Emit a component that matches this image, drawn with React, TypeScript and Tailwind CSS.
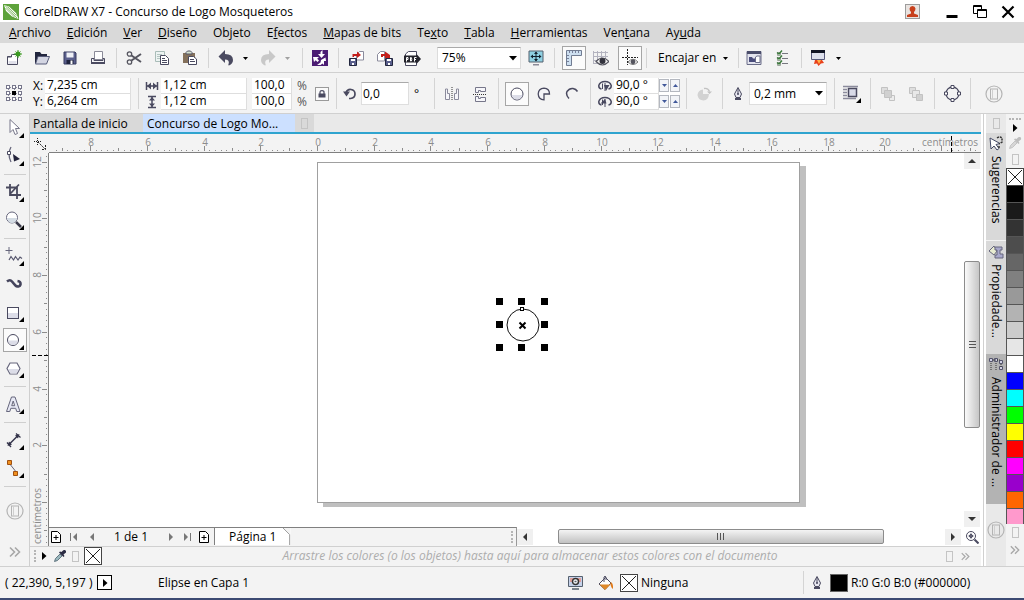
import React from 'react';
import clsx from 'clsx';

const INK = '#4a4a60';
const DIM = '#c2c2c2';
const CM = 28.37;

interface IconProps {
    size?: number;
    children: React.ReactNode;
}

const Icon: React.FC<IconProps> = ({ size = 16, children }) => (
    <svg width={size} height={size} viewBox={`0 0 ${size} ${size}`} fill="none" className="block shrink-0" aria-hidden="true">
        {children}
    </svg>
);

const Caret: React.FC<{ dim?: boolean }> = ({ dim }) => (
    <svg width="5" height="3" viewBox="0 0 5 3" className="block shrink-0" aria-hidden="true">
        <path d="M0 0h5L2.500 3z" fill={dim ? '#a0a0a0' : '#000'} />
    </svg>
);

const Sep = () => <div className="flex w-2 shrink-0 justify-center self-stretch py-1"><span className="w-px bg-[#d4d4d4]" /></div>;

interface ToolProps {
    label: string;
    className?: string;
    active?: boolean;
    children: React.ReactNode;
}

const Tool: React.FC<ToolProps> = ({ label, className = 'w-7', active, children }) => (
    <button
        type="button"
        aria-label={label}
        title={label}
        className={clsx('flex h-6 shrink-0 items-center justify-center', active && 'border border-[#a6a6a6] bg-[#fbfbfb]', className)}
    >
        {children}
    </button>
);

/* ---------- shared glyphs ---------- */

const EmptyBox = () => (
    <svg width="7" height="11" viewBox="0 0 7 11" className="block shrink-0" aria-hidden="true">
        <rect x="0.500" y="0.500" width="6" height="10" fill="none" stroke="#c4c4c4" />
    </svg>
);

const RoundDoc = () => (
    <Icon size={18}>
        <circle cx="9" cy="9" r="8" stroke="#b4b4b4" strokeWidth="1.200" />
        <rect x="5.500" y="4" width="7" height="10" stroke="#b4b4b4" />
        <path d="M7.500 4v10" stroke="#cfcfcf" />
    </Icon>
);

const Chevrons: React.FC<{ size?: number }> = ({ size = 12 }) => (
    <svg width={size} height={size} viewBox="0 0 12 12" fill="none" className="block shrink-0" aria-hidden="true">
        <path d="M1 1.500l4.500 4.500L1 10.500M6 1.500l4.500 4.500L6 10.500" stroke="#a8a8a8" strokeWidth="1.600" />
    </svg>
);

const NoColor = () => (
    <svg width="18" height="18" viewBox="0 0 18 18" className="block shrink-0" aria-hidden="true">
        <rect x="0.500" y="0.500" width="17" height="17" fill="#fff" stroke="#444" />
        <path d="M2 2l14 14M16 2L2 16" stroke="#222" />
    </svg>
);

const Dropper: React.FC<{ dim?: boolean }> = ({ dim }) => (
    <Icon size={14}>
        <path d="M1.500 12.500l1-3 4.500-4.500 2 2L4.500 11.500z" fill={dim ? '#d6d6d6' : '#9ab7bd'} stroke={dim ? '#bbb' : '#49606c'} strokeWidth="0.800" />
        <path d="M6 3.500l4.500 4.500 1-1-1-1.500L13 3.500Q13.500 1.500 12 1 10.500.5 9.500 2L8.500 3 7 2.500z" fill={dim ? '#bdbdbd' : '#2c2c44'} />
    </Icon>
);

const PenNib = () => (
    <Icon size={14}>
        <path d="M7 .5L3.500 7 5 10.500h4L10.500 7z" fill="#e8e8f0" stroke={INK} />
        <path d="M7 2v5" stroke={INK} />
        <circle cx="7" cy="7" r="1" fill={INK} />
        <path d="M4 11h6v2H4z" fill={INK} />
    </Icon>
);

const Flyout = () => <path d="M20 15v5h-5z" fill="#000" />;

/* ---------- title bar and menu ---------- */

const TitleBar = () => (
    <header className="flex h-[22px] items-center bg-white pt-px pl-[3px]">
        <Icon size={16}>
            <rect width="16" height="16" fill="#5da23a" />
            <path d="M1 1L6 2.500 13 9 15.500 15 9 12.500 3 7z" fill="#fff" />
            <path d="M2 1.500L14 14M4.500 2.500l9 9M2.500 4l9 9" stroke="#5da23a" strokeWidth="0.700" />
        </Icon>
        <h1 className="ml-[5px] flex-1 whitespace-nowrap">CorelDRAW X7 - Concurso de Logo Mosqueteros</h1>
        <button type="button" aria-label="Cuenta" className="mr-[26px]">
            <Icon size={15}>
                <rect x="0.500" y="0.500" width="14" height="14" fill="#e9e3e0" stroke="#9c9c9c" />
                <path d="M2 13v-2l4-1.500V8Q4.500 6.500 4.500 4.500 5 2 7.500 2t3 2.500Q10.500 6.500 9 8v1.500l4 1.500v2z" fill="#c8401c" />
            </Icon>
        </button>
        <button type="button" aria-label="Minimizar" className="mr-[15px]">
            <Icon size={12}><path d="M.5 9h11v3H.5z" fill="#000" /></Icon>
        </button>
        <button type="button" aria-label="Restaurar" className="mr-[14px]">
            <Icon size={14}>
                <path d="M4.500 8.500h-4v-8h8v4M.5 1.500h8M4.500 4.500h9v8h-9zM4.500 5.500h9" stroke="#000" />
            </Icon>
        </button>
        <button type="button" aria-label="Cerrar" className="mr-[9px]">
            <Icon size={14}><path d="M1.500 1.500l11 11M12.500 1.500l-11 11" stroke="#000" strokeWidth="2.200" /></Icon>
        </button>
    </header>
);

// [before, accelerator, after]
const MENUS = [
    ['', 'A', 'rchivo'],
    ['', 'E', 'dición'],
    ['', 'V', 'er'],
    ['', 'D', 'iseño'],
    ['Ob', 'j', 'eto'],
    ['E', 'f', 'ectos'],
    ['', 'M', 'apas de bits'],
    ['Te', 'x', 'to'],
    ['', 'T', 'abla'],
    ['', 'H', 'erramientas'],
    ['Ven', 't', 'ana'],
    ['Ay', 'u', 'da'],
];

const MenuBar = () => (
    <nav className="flex h-[21px] items-center gap-4 bg-[#d9d9d9] pl-[9px]">
        {MENUS.map(([pre, key, post]) => (
            <button type="button" key={pre + key + post} className="whitespace-nowrap">
                {pre}<u>{key}</u>{post}
            </button>
        ))}
    </nav>
);

/* ---------- standard toolbar ---------- */

const StandardBar = () => (
    <div className="flex h-[30px] items-center border-b border-[#d0d0d0] pt-px">
        <Tool label="Nuevo">
            <Icon size={16}>
                <path d="M1.500 14.500v-8h3l2-2h5v10z" fill="#fff" stroke={INK} />
                <path d="M1.500 7h4V4.500" stroke={INK} />
                <path d="M2.500 11h8v3h-8z" fill="#e0e0ea" />
                <circle cx="12" cy="4" r="2.500" fill="#3a9a20" />
                <path d="M12 0v8M8 4h8M9.500 1.500l5 5M14.500 1.500l-5 5" stroke="#3a9a20" />
            </Icon>
        </Tool>
        <Tool label="Abrir">
            <Icon size={16}>
                <path d="M1 2h5l1.500 2H13v3H4l-2 6H1z" fill="#22263e" />
                <path d="M4 6.500h11.500l-3 7.500H1.500z" fill="#d3d5e2" stroke="#565a78" />
            </Icon>
        </Tool>
        <Tool label="Guardar">
            <Icon size={14}>
                <path d="M1 1h11l1 1v11H1z" fill="#5a5f8c" stroke="#363a5e" />
                <path d="M3.500 1.500h7v5h-7z" fill="#eef0f6" />
                <path d="M3.500 9h7v4h-7z" fill="#20243e" />
                <path d="M7.500 9.500h2V13h-2z" fill="#fff" />
            </Icon>
        </Tool>
        <Tool label="Imprimir">
            <Icon size={16}>
                <path d="M4.500 1.500h8v8h-8z" fill="#fff" stroke="#8b8b98" />
                <path d="M1.500 8.500H4v2h9v-2h1.500v5h-13z" fill="#f5f5f7" stroke={INK} />
                <path d="M1 12h14v2H1z" fill={INK} />
            </Icon>
        </Tool>
        <Sep />
        <Tool label="Cortar">
            <Icon size={16}>
                <path d="M5.500 5.500L15 12M5.500 10.500L15 4" stroke="#55555f" strokeWidth="2" />
                <circle cx="3.500" cy="4" r="2.200" stroke="#55555f" strokeWidth="1.300" />
                <circle cx="3.500" cy="12" r="2.200" stroke="#55555f" strokeWidth="1.300" />
            </Icon>
        </Tool>
        <Tool label="Copiar">
            <Icon size={16}>
                <path d="M1.500 1.500h9v10h-9z" fill="#edf3f2" stroke="#a9bcb8" />
                <path d="M3 4.500h5M3 6.500h3M3 8.500h3" stroke="#b5c6c2" />
                <path d="M6.500 5.500h5l3 3v6h-8z" fill="#fff" stroke={INK} />
                <path d="M8 8.500h3M8 10.500h5M8 12.500h5" stroke={INK} />
            </Icon>
        </Tool>
        <Tool label="Pegar">
            <Icon size={16}>
                <path d="M1 3h12v10H1z" fill="#84705a" />
                <path d="M4 4V2.500L5.500 1h3L10 2.500V4z" fill="#d5e2cf" stroke="#556" />
                <path d="M6.500 6.500h5l3 2.500v5.500h-8z" fill="#fff" stroke={INK} />
                <path d="M8 9.500h4M8 11.500h5" stroke={INK} />
            </Icon>
        </Tool>
        <Sep />
        <Tool label="Deshacer">
            <Icon size={16}>
                <path d="M7 0v4q8 0 8 6 0 3.500-4 5.500-1.500-.5-.5-1Q12 9.500 7 9.500V13L.5 6.500z" fill={INK} />
            </Icon>
        </Tool>
        <Tool label="Lista deshacer" className="w-[10px]"><Caret /></Tool>
        <Tool label="Rehacer" className="ml-1 w-7">
            <Icon size={16}>
                <path d="M9 0v4q-8 0-8 6 0 3.500 4 5.500 1.500-.5.5-1Q4 9.500 9 9.500V13l6.500-6.500z" fill="#c8c8c8" />
            </Icon>
        </Tool>
        <Tool label="Lista rehacer" className="w-[10px]"><Caret dim /></Tool>
        <span className="w-1.5" />
        <Sep />
        <Tool label="Buscar contenido">
            <Icon size={16}>
                <rect width="16" height="16" fill="#4b1c73" />
                <path d="M10.500 0v4H13L9.500 8 6 4h2.500V2z" fill="#fff" />
                <path d="M1 7h6l-1.800 1.800L7 10.500 5.500 12 3.700 10.200 2 12z" fill="#fff" />
                <path d="M13.500 7.500L9 10l-.5 2.500L5 15h3.500l2-1.500 1.500 1.500V11h2z" fill="#fff" />
            </Icon>
        </Tool>
        <Sep />
        <Tool label="Importar">
            <Icon size={17}>
                <path d="M8.500 10V4.500l3-3h4V10z" fill="#fff" stroke="#8b8b9c" />
                <path d="M1.500 8.500h7v7h-7z" fill="#5a5f8c" stroke="#22263e" />
                <path d="M3 9h4v2H3zM4 13h2v2H4z" fill="#fff" />
                <path d="M4.500 7V4H9V1.500L13 5 9 8V6H6v1z" fill="#c4201c" />
            </Icon>
        </Tool>
        <Tool label="Exportar">
            <Icon size={17}>
                <path d="M1.500 11V4.500l3-3h4V11z" fill="#fff" stroke="#8b8b9c" />
                <path d="M9.500 8.500h7v7h-7z" fill="#5a5f8c" stroke="#22263e" />
                <path d="M11 9h4v2h-4zM12 13h2v2h-2z" fill="#fff" />
                <path d="M5 7V4h4V1.500L14 5v3H11.500L9 8V6H7v1z" fill="#c4201c" />
            </Icon>
        </Tool>
        <Tool label="Publicar como PDF">
            <Icon size={17}>
                <path d="M1.500 6V4l3-2.500h8V6M1.500 12v3.500h11V12" fill="#fff" stroke={INK} />
                <path d="M0 5.500h12.500V4L17 9l-4.500 5v-1.500H0z" fill="#24242c" />
                <path d="M2.500 11.500V7.500h1.500v2h-1.500M6.500 7.500v3.500h.8q1-1.700 0-3.500zM10.500 11.500v-4h2M10.500 9.500h1.500" stroke="#fff" />
            </Icon>
        </Tool>
        <div className="relative ml-[11px] w-[84px]">
            <select aria-label="Nivel de zoom" className="block h-[22px] w-full appearance-none border border-[#dcdcdc] border-t-[#aaa] bg-white pl-1">
                <option>75%</option>
            </select>
            <svg width="8" height="5" viewBox="0 0 8 5" className="pointer-events-none absolute top-[9px] right-1" aria-hidden="true"><path d="M0 0h8L4 4.500z" fill="#000" /></svg>
        </div>
        <Tool label="Pantalla completa" className="ml-px w-7">
            <Icon size={16}>
                <path d="M1 1h14v11H1z" fill="#8fd0e2" stroke="#55606e" />
                <path d="M8 2v9M3 6.500h10" stroke="#14202c" />
                <path d="M8 1.500l2 2.500H6zM8 11.500L6 9h4zM2.500 6.500L5 4.500v4zM13.500 6.500L11 4.500v4z" fill="#14202c" />
                <path d="M5 14h6v1.500H5z" fill="#8b8b98" />
            </Icon>
        </Tool>
        <Sep />
        <Tool label="Mostrar reglas" active className="ml-1 w-6">
            <Icon size={18}>
                <path d="M1.500 1.500h15v5h-10v10h-5z" fill="#cddff0" stroke="#717c92" />
                <path d="M4.500 2v2M7.500 2v2M10.500 2v2M13.500 2v2M2 6.500h2M2 9.500h2M2 12.500h2" stroke="#77809a" />
            </Icon>
        </Tool>
        <Tool label="Mostrar rejilla">
            <Icon size={17}>
                <path d="M1.500 1v13M5.500 1v13M9.500 1v9M13.500 1v9M1 2.500h15M1 6.500h15M1 10.500h5M1 13.500h5" stroke="#b3b3bf" />
                <path d="M4 11.500Q10.500 4.500 17 11.500 10.500 18.500 4 11.500z" fill="#f4f4f4" stroke="#55555f" strokeWidth="1.200" />
                <circle cx="10.500" cy="11" r="3" fill="#33333d" />
            </Icon>
        </Tool>
        <Tool label="Mostrar líneas guía" active className="ml-1 w-6">
            <Icon size={18}>
                <path d="M6.500 0v16M1 8.500h16" stroke="#222" strokeDasharray="2 1" />
                <path d="M7 13Q12 7.500 17 13 12 18 7 13z" fill="#f2f2f2" stroke="#777" />
                <circle cx="12" cy="12.800" r="2.400" fill="#55555f" />
            </Icon>
        </Tool>
        <Sep />
        <button type="button" className="ml-2 flex w-[72px] items-center justify-between whitespace-nowrap pr-0.5">
            Encajar en <Caret />
        </button>
        <span className="w-1" />
        <Sep />
        <Tool label="Opciones" className="w-6">
            <Icon size={16}>
                <path d="M1 1.500h14v13H1z" fill="#e3e4ee" stroke="#6a6d88" />
                <path d="M1 1h14v3H1z" fill="#4a4d6a" />
                <path d="M3 7h3l1 1.500h3V12H3z" fill="#4a4d7c" />
                <path d="M9.500 12.500V7l1.500-1h3v6.500z" fill="#fff" stroke="#6a6d88" />
            </Icon>
        </Tool>
        <Tool label="Lista de opciones" className="ml-[3px] w-7">
            <Icon size={16}>
                <path d="M7 3.500h6M7 8.500h6M7 13.500h6" stroke="#77777f" />
                <path d="M2.500 2.500h3v3h-3zM2.500 7.500h3v3h-3zM2.500 12.500h3v3h-3z" fill="#fff" stroke="#9aa59a" />
                <path d="M2 2.500L4 4l3-3.500M2 7.500L4 9l3-3.500M2 12.500L4 14l3-3.500" stroke="#3c7a3c" strokeWidth="1.400" />
            </Icon>
        </Tool>
        <Sep />
        <Tool label="Iniciador de aplicaciones" className="w-[26px]">
            <Icon size={16}>
                <path d="M1.500 .5h13v9h-13z" fill="#dcdfec" stroke="#55587a" />
                <path d="M1 0h14v3H1z" fill="#101424" />
                <path d="M5 10h7l2 3-3 .5L8.500 16 7 13.500 4 14z" fill="#e8421c" />
                <path d="M7 10h4l-2 4z" fill="#ffb347" />
            </Icon>
        </Tool>
        <Tool label="Lista de aplicaciones" className="ml-0.5 w-[10px]"><Caret /></Tool>
    </div>
);

/* ---------- property bar ---------- */

interface FieldProps {
    id: string;
    label: React.ReactNode;
    name: string;
    value: string;
    width: string;
    labelWidth: string;
}

const Field: React.FC<FieldProps> = ({ id, label, name, value, width, labelWidth }) => (
    <div className="flex h-4 items-center">
        <label htmlFor={id} aria-label={name} className={clsx('flex shrink-0', labelWidth)}>{label}</label>
        <input
            id={id}
            defaultValue={value}
            className={clsx('h-4 border-r border-b border-[#dedede] bg-white pl-[2px] leading-4 outline-none', width)}
        />
    </div>
);

const FIELD_STACK = 'flex shrink-0 flex-col';

const AngleIcon: React.FC<{ flip?: boolean }> = ({ flip }) => (
    <Icon size={14}>
        <path d="M3.500 10Q.5 9.500 .8 6.500 2 2.500 7 2.500t6.200 4Q13.500 9.500 10.500 10" stroke={INK} strokeWidth="1.500" />
        <path d="M4.500 4.500v5.500M7 4v8" stroke={INK} />
        {flip ? <path d="M2.500 8.500h6L7 4z" fill={INK} /> : <path d="M6 6h5.500L8 12z" fill={INK} />}
    </Icon>
);

const Spin = () => (
    <span className="flex gap-px">
        {['Reducir', 'Aumentar'].map(name => (
            <button key={name} type="button" aria-label={name} className="flex h-[13px] w-[10px] items-center justify-center border border-[#b4b8c0] bg-[#f2f4f8]">
                <svg width="5" height="3" viewBox="0 0 5 3" aria-hidden="true"><path d={name === 'Reducir' ? 'M0 0h5L2.500 3z' : 'M0 3h5L2.500 0z'} fill="#40589a" /></svg>
            </button>
        ))}
    </span>
);

const OriginGrid = () => (
    <Icon size={17}>
        <path d="M2 2.500h13M2 8.500h13M2 14.500h13M2.500 2v13M8.500 2v13M14.500 2v13" stroke="#8b8b9c" strokeDasharray="1 1" />
        {[1, 7, 13].map(y => [1, 7, 13].map(x => (
            <rect key={`${x}-${y}`} x={x - 0.5} y={y - 0.5} width="3" height="3" fill={x === 7 && y === 7 ? '#000' : '#fff'} stroke={x === 7 && y === 7 ? '#000' : '#77778c'} />
        )))}
    </Icon>
);

const PropertyBar = () => (
    <div className="flex h-[41px] items-center border-b border-[#d0d0d0] pt-px">
        <Tool label="Origen del objeto"><OriginGrid /></Tool>
        <div className={clsx(FIELD_STACK, 'ml-[5px]')}>
            <Field id="pos-x" name="Posición X" label="X:" value="7,235 cm" width="w-[86px]" labelWidth="w-3" />
            <Field id="pos-y" name="Posición Y" label="Y:" value="6,264 cm" width="w-[86px]" labelWidth="w-3" />
        </div>
        <span className="w-[3px]" />
        <Sep />
        <div className={clsx(FIELD_STACK, 'ml-[3px]')}>
            <Field
                id="width"
                name="Anchura"
                label={<Icon size={14}><path d="M1.500 3v8M12.500 3v8M2 7h10" stroke={INK} strokeWidth="1.500" /><path d="M2 7l4-3.500v7zM12 7L8 3.500v7z" fill={INK} /></Icon>}
                value="1,12 cm"
                width="w-[86px]"
                labelWidth="w-4"
            />
            <Field
                id="height"
                name="Altura"
                label={<Icon size={14}><path d="M3 1.500h8M3 12.500h8M7 2v10" stroke={INK} strokeWidth="1.500" /><path d="M7 2l3 3.500H4zM7 12L4 8.500h6z" fill={INK} /></Icon>}
                value="1,12 cm"
                width="w-[86px]"
                labelWidth="w-4"
            />
        </div>
        <div className={clsx(FIELD_STACK, 'ml-[5px]')}>
            <Field id="scale-x" name="Escala horizontal" label="" value="100,0" width="w-10" labelWidth="w-0" />
            <Field id="scale-y" name="Escala vertical" label="" value="100,0" width="w-10" labelWidth="w-0" />
        </div>
        <div className="ml-[5px] flex w-3 flex-col leading-4 text-[#555]">
            <span>%</span>
            <span>%</span>
        </div>
        <button type="button" aria-label="Bloquear proporción" className="ml-1.5 flex size-[14px] items-center justify-center border border-[#9a9a9a] bg-[#fafafa]">
            <Icon size={8}>
                <path d="M.5 3.500h7v4h-7z" fill={INK} />
                <path d="M2 4V2Q2 .7 4 .7T6 2v2" stroke={INK} strokeWidth="1.200" />
            </Icon>
        </button>
        <span className="w-[3px]" />
        <Sep />
        <label htmlFor="rotation" aria-label="Ángulo de rotación" className="ml-[3px]">
            <Icon size={14}>
                <path d="M3 5.500Q4.500 2 8 2.500q4 .5 4 4.500T7.500 11.500H6" stroke={INK} strokeWidth="1.700" />
                <path d="M0 4.500h7l-3.500 5z" fill={INK} />
            </Icon>
        </label>
        <input id="rotation" defaultValue="0,0" className="ml-1 h-[23px] w-12 border border-[#dedede] border-t-[#aaa] bg-white pl-px outline-none" />
        <span className="ml-[5px] w-[9px]">°</span>
        <span className="w-[7px]" />
        <Sep />
        <Tool label="Reflejar horizontalmente">
            <Icon size={16}>
                <path d="M1.500 3v10.500h4V7.500h-2V3zM14.500 3v10.500h-4V7.500h2V3z" fill="#f6f6fa" stroke="#8b8b9c" />
                <path d="M8 1v14" stroke="#333" strokeDasharray="1 1" />
            </Icon>
        </Tool>
        <Tool label="Reflejar verticalmente">
            <Icon size={16}>
                <path d="M3.500 1.500h10v4h-5v-1h-2v2h-3zM3.500 15.500h10v-4h-5v1h-2v-2h-3z" fill="#f6f6fa" stroke="#77778a" />
                <path d="M1 8.500h14" stroke="#333" strokeDasharray="1 1" />
            </Icon>
        </Tool>
        <Sep />
        <Tool label="Elipse" active className="ml-[3px] w-6">
            <Icon size={14}>
                <circle cx="7" cy="7" r="6" fill="#fff" stroke={INK} />
                <path d="M1.500 8h11Q11 12.500 7 12.500T1.500 8z" fill="#dcdde8" />
            </Icon>
        </Tool>
        <Tool label="Sectores" className="ml-px w-7">
            <Icon size={14}>
                <path d="M7 7h5.500Q12.500 1.500 7 1.200 1.500 1.500 1.200 7 1.500 12.500 7 12.800z" fill="#f4f4f8" stroke={INK} strokeWidth="1.300" />
            </Icon>
        </Tool>
        <Tool label="Arco">
            <Icon size={14}><path d="M4 11.500Q.5 8 2 4.500 4.500 1 8 1.500q3 .5 4.500 3" stroke={INK} strokeWidth="1.500" /></Icon>
        </Tool>
        <Sep />
        <div className={clsx(FIELD_STACK, 'ml-1')}>
            <div className="flex items-center bg-white">
                <span className="bg-[#f3f3f3]"><Field id="angle-start" name="Ángulo inicial" label={<AngleIcon />} value="90,0 °" width="w-[45px]" labelWidth="w-4" /></span>
                <Spin />
            </div>
            <div className="flex items-center bg-white">
                <span className="bg-[#f3f3f3]"><Field id="angle-end" name="Ángulo final" label={<AngleIcon flip />} value="90,0 °" width="w-[45px]" labelWidth="w-4" /></span>
                <Spin />
            </div>
        </div>
        <span className="w-[2px]" />
        <Sep />
        <Tool label="Cambiar dirección">
            <Icon size={16}>
                <path d="M7 8h6Q12.500 14 7.500 14.500 2 14 1.500 9 2 4 7 3.500z" fill="#d2d2d2" />
                <path d="M8 2.500q4-1 5.500 3" stroke={DIM} strokeWidth="1.300" />
                <path d="M11 5.500h5l-2.500 2.500z" fill={DIM} />
            </Icon>
        </Tool>
        <Sep />
        <label htmlFor="outline" aria-label="Anchura del contorno" className="ml-[5px]"><PenNib /></label>
        <div className="relative ml-1 w-[78px]">
            <select id="outline" className="block h-[23px] w-full appearance-none border border-[#dedede] border-t-[#aaa] bg-white pl-1">
                <option>0,2 mm</option>
            </select>
            <svg width="8" height="5" viewBox="0 0 8 5" className="pointer-events-none absolute top-[9px] right-1" aria-hidden="true"><path d="M0 0h8L4 4.500z" fill="#000" /></svg>
        </div>
        <span className="w-[3px]" />
        <Sep />
        <Tool label="Ajustar texto">
            <Icon size={20}>
                <path d="M1 2.500h15M1 5.500h4M1 8.500h4M1 11.500h4M1 14.500h13" stroke="#8b8b9c" strokeWidth="1.500" />
                <path d="M6.500 4.500h8v8h-8z" fill="#d8dae8" stroke={INK} strokeWidth="1.500" />
                <path d="M19 14v5h-5z" fill="#000" />
            </Icon>
        </Tool>
        <Sep />
        <Tool label="Hacia delante">
            <Icon size={16}>
                <path d="M1.500 1.500h6v6h-6z" fill="#dedede" stroke={DIM} />
                <path d="M9.500 9.500h5v5h-5z" fill="#ececec" stroke={DIM} />
                <path d="M4.500 4.500h7v7h-7z" fill="#d0d0d0" stroke={DIM} />
            </Icon>
        </Tool>
        <Tool label="Hacia atrás">
            <Icon size={16}>
                <path d="M1.500 1.500h6v6h-6z" fill="#dedede" stroke={DIM} />
                <path d="M4.500 4.500h7v7h-7z" fill="#e8e8e8" stroke={DIM} />
                <path d="M8.500 8.500h6v6h-6z" fill="#d0d0d0" stroke={DIM} />
            </Icon>
        </Tool>
        <Sep />
        <Tool label="Convertir en curvas">
            <Icon size={17}>
                <circle cx="8.500" cy="8.500" r="6.500" stroke={INK} strokeWidth="1.300" />
                <path d="M7 .5h3v3H7zM7 13.500h3v3H7zM.5 7h3v3h-3zM13.500 7h3v3h-3z" fill="#fff" stroke={INK} />
            </Icon>
        </Tool>
        <Sep />
        <Tool label="Personalizar" className="ml-1.5 w-7"><RoundDoc /></Tool>
    </div>
);

/* ---------- toolbox ---------- */

const TOOL_GROUPS: { name: string; active?: boolean; art: React.ReactNode }[][] = [
    [
        { name: 'Selección', art: <><path d="M6 1.500v13l3-3 2 5 2.500-1-2-5h4z" fill="#fff" stroke="#77778a" /><Flyout /></> },
        { name: 'Forma', art: <><path d="M7 1Q3 8 7 16" stroke="#66667c" strokeWidth="1.300" /><path d="M3.500 5.500h3v3h-3z" fill="#fff" stroke={INK} /><path d="M9 8l7 5-6 2.500z" fill="#22223a" /><Flyout /></> },
    ],
    [
        { name: 'Recortar', art: <><path d="M6 2v11h11M2 5.500h11V17M15 2.500L6 12" stroke="#4a4a5e" strokeWidth="1.800" /><Flyout /></> },
        { name: 'Zoom', art: <><circle cx="8" cy="7.500" r="5.500" fill="#fff" stroke="#66667c" /><path d="M3 8h10q-1 5-5 5T3 8z" fill="#d4dce4" /><path d="M12 12l5 5" stroke="#3a3a4a" strokeWidth="2.500" /><Flyout /></> },
    ],
    [
        { name: 'Mano alzada', art: <><path d="M5 1v7M1.500 4.500h7" stroke="#66667c" /><path d="M5 14l2-3.500 2.500 3.500 2-3.500L14 14l2-3 2 1.500" stroke="#55556c" strokeWidth="1.200" /><Flyout /></> },
        { name: 'Medios artísticos', art: <><path d="M3 7.500Q6 5 8 7.500t4 4.500q3.500 1.500 4.500-1.500 .5-3-3-3.500" stroke="#44445c" strokeWidth="2.600" /></> },
        { name: 'Rectángulo', art: <><rect x="3.500" y="5.500" width="11" height="11" fill="#fff" stroke={INK} /><path d="M4 11h10v5H4z" fill="#dcdde8" /><Flyout /></> },
        { name: 'Elipse', active: true, art: <><circle cx="9" cy="10" r="5.500" fill="#fff" stroke={INK} /><path d="M4 10.500h10q-1 4.500-5 4.500t-5-4.500z" fill="#dcdde8" /><Flyout /></> },
        { name: 'Polígono', art: <><path d="M6 5h7l3 5.500-3 5.500H6l-3-5.500z" fill="#fff" stroke="#66667c" strokeWidth="1.200" /><path d="M4 11h11l-2.500 4.500h-6z" fill="#dcdde8" /><Flyout /></> },
    ],
    [
        { name: 'Texto', art: <><path d="M7.500 3h3.500L16 17.500h-3.300l-1-3.200H6.800l-1 3.200H2.500zM9.200 7l-1.500 4.700h3z" fill="#e6e8f4" stroke="#66667c" /><Flyout /></> },
    ],
    [
        { name: 'Cota', art: <><path d="M5 14.500L14 5.500" stroke="#33334a" strokeWidth="1.500" /><path d="M3 12.500l4 4.500M12 3.500l4.500 4" stroke="#33334a" strokeWidth="1.300" /><path d="M3.500 16l1.500-4.500 3 3zM15.500 4L11 5.500l3 3z" fill="#33334a" /><Flyout /></> },
        { name: 'Conector', art: <><path d="M5 5l8 10" stroke="#66667c" /><path d="M3.500 2.500h4v4h-4zM9.500 13.500h4v4h-4z" fill="#f0901e" stroke="#a05010" /><Flyout /></> },
    ],
];

const Toolbox = () => (
    <aside className="flex w-[30px] shrink-0 flex-col items-center border-r border-[#cfcfcf]">
        {TOOL_GROUPS.map(group => (
            <React.Fragment key={group[0].name}>
                {group.map(tool => (
                    <span key={tool.name} className="flex h-7 items-center">
                        <Tool label={tool.name} active={tool.active} className="w-6">
                            <span className={clsx(!tool.active && 'p-px')}><Icon size={21}>{tool.art}</Icon></span>
                        </Tool>
                    </span>
                ))}
                <span className="flex h-2 items-center"><span className="h-px w-[22px] bg-[#cfcfcf]" /></span>
            </React.Fragment>
        ))}
        <button type="button" aria-label="Personalizar herramientas" className="mt-3"><RoundDoc /></button>
        <button type="button" aria-label="Más herramientas" className="mt-auto mb-2"><Chevrons /></button>
    </aside>
);

/* ---------- rulers ---------- */

const range = (from: number, to: number) => Array.from({ length: to - from + 1 }, (_, i) => from + i);

const tickLength = (n: number) => (n % 10 === 0 ? 5 : n % 5 === 0 ? 3 : 1);

const HRuler = () => (
    <svg height="18" className="block min-w-0 flex-1 text-[10px]" aria-hidden="true">
        {range(-46, 117).map(n => {
            const x = Math.round(268 + (n * CM) / 5);
            const len = tickLength(n);
            return <rect key={n} x={x} y={17 - len} width="1" height={len} fill="#8c8c8c" />;
        })}
        {range(-4, 10).map(n => (
            <text key={n} x={Math.round(269 + n * 2 * CM)} y="12" textAnchor="middle" fill="#8c8c8c">{Math.abs(n * 2)}</text>
        ))}
        <text x="100%" dx="-3" y="12" textAnchor="end" fill="#8c8c8c">centímetros</text>
        <path d="M902.500 2v16" stroke="#000" strokeDasharray="4 2" />
    </svg>
);

const VRuler = () => (
    <svg width="19" className="block h-full shrink-0 border-r border-[#808080] text-[10px]" aria-hidden="true">
        {range(-7, 61).map(n => {
            const len = tickLength(n);
            return <rect key={n} x={17 - len} y={Math.round(349 - (n * CM) / 5)} width={len} height="1" fill="#8c8c8c" />;
        })}
        {range(1, 6).map(n => {
            const y = Math.round(349 - n * 2 * CM);
            return <text key={n} x="11" y={y} textAnchor="middle" transform={`rotate(-90 11 ${y})`} fill="#8c8c8c">{n * 2}</text>;
        })}
        <text x="11" y="363" textAnchor="middle" transform="rotate(-90 11 363)" fill="#8c8c8c">centímetros</text>
        <path d="M2 202.500h16" stroke="#000" strokeDasharray="4 2" />
    </svg>
);

/* ---------- document window ---------- */

const DocTabs = () => (
    <div className="flex h-5 items-stretch border-b-2 border-[#2fa4cf] bg-[#e9e9e9]">
        <button type="button" className="w-[113px] bg-[#d9d9d9] pt-px pl-[3px] text-left whitespace-nowrap">Pantalla de inicio</button>
        <button type="button" className="w-[152px] bg-[#cce0ff] pt-px pl-1 text-left whitespace-nowrap">Concurso de Logo Mo...</button>
        <button type="button" aria-label="Nueva pestaña" className="flex w-[19px] items-center justify-center bg-[#d9d9d9]"><EmptyBox /></button>
    </div>
);

const Selection = () => (
    <svg width="53" height="54" viewBox="0 0 53 54" className="absolute top-[145px] left-[447px]" aria-hidden="true">
        <circle cx="27" cy="27" r="16" fill="none" stroke="#111" />
        <rect x="24.500" y="9.500" width="3" height="3" fill="#fff" stroke="#000" />
        <path d="M23.500 24.500l6 6M29.500 24.500l-6 6" stroke="#000" strokeWidth="2" />
        {[0, 23, 46].map(y => [0, 22, 45].map(x => (
            !(x === 22 && y === 23) && <rect key={`${x}-${y}`} x={x} y={y} width="7" height="7" fill="#000" />
        )))}
    </svg>
);

const Arrow: React.FC<{ d: string; fill?: string }> = ({ d, fill = '#333' }) => (
    <svg width="8" height="8" viewBox="0 0 8 8" className="block" aria-hidden="true"><path d={d} fill={fill} /></svg>
);

const VScroll = () => (
    <div className="mr-px flex w-4 shrink-0 flex-col">
        <button type="button" aria-label="Subir" className="flex h-4 items-center justify-center bg-[#f0f0f0]"><Arrow d="M0 6h8L4 2z" /></button>
        <span className="flex-[93]" />
        <div className="flex flex-[166] items-center justify-center rounded-xs border border-[#8c8c8c] bg-linear-to-r from-[#fafafa] to-[#c6c6c6]">
            <span className="h-[7px] w-[7px] border-y border-[#555] py-0.5"><span className="block h-px bg-[#555]" /></span>
        </div>
        <span className="flex-[83]" />
        <button type="button" aria-label="Bajar" className="flex h-4 items-center justify-center bg-[#f0f0f0]"><Arrow d="M0 2h8L4 6z" /></button>
    </div>
);

const AddPage = () => (
    <Icon size={12}>
        <path d="M1.500 .5h6l3 3v8h-9z" fill="#fff" stroke="#000" />
        <path d="M6 4v5M3.500 6.500h5" stroke="#000" />
    </Icon>
);

const PageBar = () => (
    <div className="flex h-[19px] bg-white">
        <div className="flex flex-[467] items-center border-t border-r border-t-[#808080] border-r-[#999] bg-[#f3f3f3] pb-px">
            <button type="button" aria-label="Agregar página antes" className="ml-px w-3"><AddPage /></button>
            <button type="button" aria-label="Primera página" className="ml-2 w-2">
                <svg width="8" height="8" viewBox="0 0 8 8" aria-hidden="true"><path d="M0 0h1v8H0zM7 0v8L3 4z" fill="#777" /></svg>
            </button>
            <button type="button" aria-label="Página anterior" className="ml-[10px] w-2"><Arrow d="M6 0v8L2 4z" fill="#777" /></button>
            <span className="ml-[17px] w-9 text-center whitespace-nowrap">1 de 1</span>
            <button type="button" aria-label="Página siguiente" className="ml-[18px] w-2"><Arrow d="M2 0v8l4-4z" fill="#777" /></button>
            <button type="button" aria-label="Última página" className="ml-2 w-2">
                <svg width="8" height="8" viewBox="0 0 8 8" aria-hidden="true"><path d="M7 0h1v8H7zM1 0v8l4-4z" fill="#777" /></svg>
            </button>
            <button type="button" aria-label="Agregar página después" className="ml-[7px] w-3"><AddPage /></button>
            <button type="button" className="ml-1 flex h-full items-center border-l border-[#808080] bg-white pl-[14px] whitespace-nowrap">
                Página 1
                <svg width="15" height="18" viewBox="0 0 15 18" className="block h-full" aria-hidden="true">
                    <path d="M7 0h8v18h-1V7z" fill="#f3f3f3" />
                    <path d="M7 0l7 7v11" fill="none" stroke="#999" />
                </svg>
            </button>
            <span className="mr-[3px] ml-auto h-3 border-l-2 border-dotted border-[#b5b5b5]" />
        </div>
        <div className="flex flex-[465] items-center">
            <button type="button" aria-label="Desplazar a la izquierda" className="flex h-4 w-4 items-center justify-center bg-[#f0f0f0]"><Arrow d="M6 0v8L2 4z" /></button>
            <span className="flex-[26]" />
            <div className="flex h-[15px] flex-[326] items-center justify-center rounded-xs border border-[#8c8c8c] bg-linear-to-b from-[#f4f4f4] to-[#c2c2c2]">
                <span className="h-[7px] w-[7px] border-x border-[#555] px-0.5"><span className="block h-full w-px bg-[#555]" /></span>
            </div>
            <span className="flex-[62]" />
            <button type="button" aria-label="Desplazar a la derecha" className="flex h-4 w-4 items-center justify-center bg-[#f0f0f0]"><Arrow d="M2 0v8l4-4z" /></button>
            <button type="button" aria-label="Navegador" className="mr-0.5 ml-1 w-[14px]">
                <Icon size={14}>
                    <circle cx="6" cy="6" r="4.500" stroke={INK} />
                    <path d="M6 3.500v5M3.500 6h5" stroke={INK} strokeWidth="1.200" />
                    <circle cx="6" cy="6" r="1.500" stroke={INK} />
                    <path d="M9.500 9.500l4 4" stroke={INK} strokeWidth="2" />
                </Icon>
            </button>
        </div>
    </div>
);

const DocPalette = () => (
    <div className="flex h-5 items-center border-t border-[#d0d0d0] pb-px pl-1">
        <span className="h-3 border-l-2 border-dotted border-[#b5b5b5]" />
        <button type="button" aria-label="Opciones de paleta" className="ml-1 w-2"><Arrow d="M2 0v8l4.500-4z" fill="#000" /></button>
        <button type="button" aria-label="Cuentagotas" className="ml-[5px] w-[14px]"><Dropper /></button>
        <span className="ml-[5px]"><EmptyBox /></span>
        <button type="button" aria-label="Sin color" className="ml-[5px]"><NoColor /></button>
        <p className="min-w-0 flex-1 overflow-hidden pl-3 text-center whitespace-nowrap text-[#adadad] italic">
            Arrastre los colores (o los objetos) hasta aquí para almacenar estos colores con el documento
        </p>
        <span className="mr-2"><EmptyBox /></span>
        <span className="mr-[11px]"><Chevrons size={9} /></span>
    </div>
);

const DocumentWindow = () => (
    <main className="flex min-w-0 flex-1 flex-col">
        <DocTabs />
        <div className="flex h-[19px]">
            <div className="flex w-[19px] items-center justify-center">
                <Icon size={12}>
                    <path d="M3.500 0v8M0 3.500h8" stroke="#222" strokeDasharray="1 1" />
                    <path d="M4 4l7 7M11.500 7v4.500H7" stroke="#222" strokeDasharray="2 1" />
                </Icon>
            </div>
            <div className="flex min-w-0 flex-1 border-b border-[#808080]"><HRuler /></div>
        </div>
        <div className="flex flex-1">
            <VRuler />
            <div className="flex min-w-0 flex-1 flex-col">
                <div className="flex flex-1 bg-white">
                    <div className="relative min-h-[360px] flex-1 overflow-hidden">
                        <div className="absolute top-[9px] left-[268px] h-[341px] w-[483px] border border-[#a0a0a0] bg-white shadow-[6px_4px_0_#bfbfbf]" />
                        <Selection />
                    </div>
                    <VScroll />
                </div>
                <PageBar />
            </div>
        </div>
        <DocPalette />
    </main>
);

/* ---------- dockers and colour palette ---------- */

const DOCKERS = [
    {
        name: 'Sugerencias',
        box: 'h-[107px] bg-[#d9d9d9]',
        art: <><path d="M2 2l1 11 3-3 3 4 2-1.500-3-4 4-1z" fill="#fff" stroke="#444a66" /><path d="M9 2q3-2 5 0v4l-3 2M11 10v2" stroke="#333" strokeWidth="1.500" strokeDasharray="2 1" /></>,
    },
    {
        name: 'Propiedade...',
        box: 'h-[114px] bg-[#d9d9d9] border-t border-[#f3f3f3]',
        art: <><path d="M1 7l5-5 3 5-3 4z" fill="#e8ecd0" stroke="#66667c" /><path d="M7 3h7v3h-2v4h3v4H7v-3h2V6H7z" fill="#a9a9cc" stroke="#66667c" /></>,
    },
    {
        name: 'Administrador de ...',
        box: 'h-[150px] bg-[#b3b3b3]',
        art: <><path d="M1.500 1.500h3v3h-3zM6.500 1.500h3v3h-3zM11.500 3.500h3v3h-3zM11.500 9.500h3v3h-3z" fill="#d0d0e4" stroke="#55556c" /><path d="M3 6v8M8 6v8M5 3h7M13 7v3" stroke="#333" strokeDasharray="1 1" /></>,
    },
];

const Dockers = () => (
    <aside className="flex w-5 shrink-0 flex-col items-center bg-[#e9e9e9]">
        <button type="button" aria-label="Acoplar" className="flex h-[19px] items-center"><EmptyBox /></button>
        {DOCKERS.map(d => (
            <button key={d.name} type="button" className={clsx('flex w-full flex-col items-center gap-1 overflow-hidden pt-[3px]', d.box)}>
                <Icon size={16}>{d.art}</Icon>
                <span className="leading-5 whitespace-nowrap [writing-mode:vertical-rl]">{d.name}</span>
            </button>
        ))}
        <button type="button" aria-label="Personalizar ventanas" className="mt-[17px]"><RoundDoc /></button>
    </aside>
);

const PALETTE = [
    '#000000', '#1a1a1a', '#333333', '#4d4d4d', '#666666', '#808080', '#999999', '#b3b3b3', '#cccccc', '#e6e6e6',
    '#ffffff', '#0000ff', '#00ffff', '#00ff00', '#ffff00', '#ff0000', '#ff00ff', '#9900cc', '#ff6600', '#ff99cc',
];

const ColorPalette = () => (
    <aside className="flex w-[18px] shrink-0 flex-col items-center">
        <span className="mt-1 w-3 border-t-2 border-dotted border-[#b5b5b5]" />
        <button type="button" aria-label="Opciones de paleta" className="mt-1"><Arrow d="M2 0v8l4.500-4z" fill="#000" /></button>
        <button type="button" aria-label="Cuentagotas" className="mt-1"><Dropper dim /></button>
        <span className="mt-1 mb-[3px]"><EmptyBox /></span>
        <button type="button" aria-label="Sin color"><NoColor /></button>
        <div className="flex h-[338px] w-full flex-col overflow-hidden">
            {PALETTE.map(color => (
                <button key={color} type="button" aria-label={color} className="h-[17px] shrink-0 border-x border-b border-[#555]" style={{ backgroundColor: color }} />
            ))}
        </div>
        <span className="mt-[3px]"><EmptyBox /></span>
        <span className="mt-[7px]"><Chevrons size={10} /></span>
    </aside>
);

/* ---------- status bar ---------- */

const StatusBar = () => (
    <footer className="flex h-[34px] items-center border-t border-b-2 border-t-[#d0d0d0] border-b-[#3c4a72] whitespace-nowrap">
        <span className="w-[91px] pl-[5px]">( 22,390, 5,197 )</span>
        <button type="button" aria-label="Ver más" className="ml-1.5 flex size-[15px] items-center justify-center border border-black bg-white"><Arrow d="M2 0v8l4.500-4z" fill="#000" /></button>
        <span className="ml-[46px] flex-1">Elipse en Capa 1</span>
        <button type="button" aria-label="Prueba de color" className="w-4">
            <Icon size={16}>
                <path d="M.5 1.500h14v10H.5z" fill="#c6d2ea" stroke="#55606e" />
                <path d="M2 3h11v4H2z" fill="#e0a09a" />
                <circle cx="7.500" cy="6.500" r="3" fill="#fff" stroke="#333" strokeWidth="1.500" />
                <path d="M6.500 6.500h2M4 14h7" stroke="#55606e" strokeWidth="1.500" />
            </Icon>
        </button>
        <button type="button" aria-label="Relleno" className="ml-[14px] w-4">
            <Icon size={16}>
                <path d="M1 9l6.500-6.500 5.500 5.500-6 6.500z" fill="#fff" stroke={INK} />
                <path d="M1.500 9.500h11L7 15z" fill="#e08a2a" />
                <path d="M6 7V2q1-1.500 2 0v3" stroke={INK} />
                <path d="M12.500 7q3 1 2.500 7-2-1-2.500-5z" fill="#e07a1a" />
            </Icon>
        </button>
        <span className="ml-1.5"><NoColor /></span>
        <span className="ml-[3px] w-[158px]">Ninguna</span>
        <Sep />
        <span className="ml-[3px]"><PenNib /></span>
        <span className="ml-1.5 size-[18px] border border-[#666] bg-black" />
        <span className="ml-[3px] w-[173px]">R:0 G:0 B:0 (#000000)</span>
    </footer>
);

export default function App() {
    return (
        <div className="flex min-h-screen flex-col overflow-hidden bg-[#f3f3f3] font-['Open_Sans','Noto_Sans',sans-serif] text-[12px] leading-4 text-black">
            <TitleBar />
            <MenuBar />
            <StandardBar />
            <PropertyBar />
            <div className="flex flex-1">
                <Toolbox />
                <DocumentWindow />
                <div className="w-[5px] shrink-0 border-x-2 border-white bg-[#d0d0d0]" />
                <Dockers />
                <ColorPalette />
            </div>
            <StatusBar />
        </div>
    );
}
